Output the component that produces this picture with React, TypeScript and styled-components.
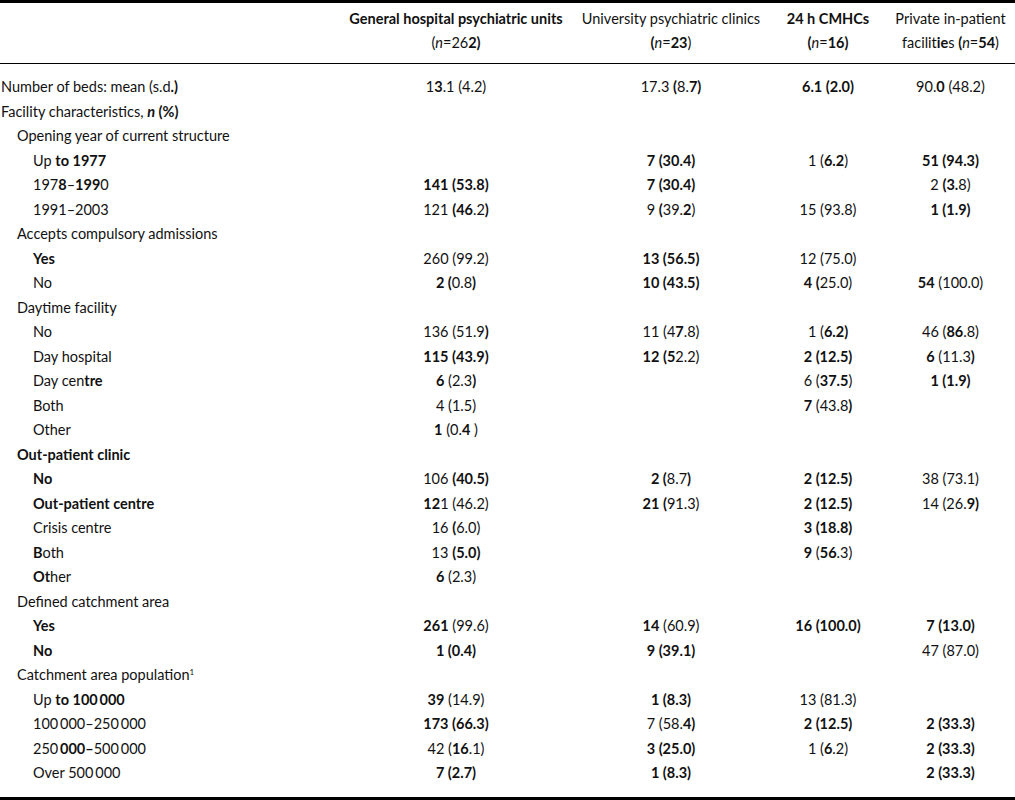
import React from "react";
import styled, { createGlobalStyle } from "styled-components";

const Global = createGlobalStyle`
  html, body { margin: 0; padding: 0; background: #fff; }
  body { font-family: Lato, "Open Sans", "Liberation Sans", sans-serif; color: #111; }
`;

const Table = styled.table`
  width: 1015px;
  border-collapse: collapse;
  table-layout: fixed;
  border-top: 3px solid #000;
  border-bottom: 3px solid #000;
  font-size: 14.5px;
`;

const HeadRow = styled.tr`
  border-bottom: 1px solid #000;
`;

const HeadCell = styled.th<{ $align?: string }>`
  font-weight: 400;
  text-align: ${(p) => p.$align || "center"};
  line-height: 24px;
  padding: 4px 0 8px;
  white-space: nowrap;
  vertical-align: top;
`;

const Body = styled.tbody`
  tr:first-child td { padding-top: 11px; }
  tr:last-child td { padding-bottom: 11px; }
`;

const Row = styled.tr``;

const LabelCell = styled.td<{ $level: number }>`
  padding: 0 0 0 ${(p) => 1 + p.$level * 16}px;
  line-height: 24.5px;
  white-space: nowrap;
`;

const ValueCell = styled.td`
  padding: 0;
  line-height: 24.5px;
  text-align: center;
  white-space: nowrap;
`;

const B = styled.b`
  font-weight: 700;
`;

const I = styled.i`
  font-style: italic;
`;

const Sup = styled.sup`
  font-size: 8px;
  line-height: 0;
  vertical-align: 5px;
`;

function rich(s: string, key = "r"): React.ReactNode[] {
  const parts = s.split(/(\*\*[^*]+\*\*|_[^_]+_|\^[^^]+\^)/);
  return parts
    .filter((p) => p !== "")
    .map((p, i) => {
      const k = `${key}-${i}`;
      if (p.startsWith("**") && p.endsWith("**"))
        return <B key={k}>{rich(p.slice(2, -2), k)}</B>;
      if (p.startsWith("_") && p.endsWith("_") && p.length > 1)
        return <I key={k}>{p.slice(1, -1)}</I>;
      if (p.startsWith("^") && p.endsWith("^") && p.length > 1)
        return <Sup key={k}>{p.slice(1, -1)}</Sup>;
      return <React.Fragment key={k}>{p}</React.Fragment>;
    });
}

type RowData = { label: string; level: number; v?: [string, string, string, string] };

const T = "\u2009";

const rows: RowData[] = [
  { label: "Number of beds: mean (s.d**.)**", level: 0, v: ["1**3**.1 (4.2)", "17.3 **(**8.**7)**", "**6.1 (2.0)**", "90.**0** (48.2)"] },
  { label: "Facility characteristics, **_n_ (%)**", level: 0 },
  { label: "Opening year of current structure", level: 1 },
  { label: "Up **to 1977**", level: 2, v: ["", "**7 (30.4)**", "1 (**6.2**)", "**51 (94.3)**"] },
  { label: "197**8**–**199**0", level: 2, v: ["**141 (53.8)**", "**7 (30.4)**", "", "2 **(3.**8)"] },
  { label: "1991–2003", level: 2, v: ["121 **(46**.2**)**", "9 **(**39.**2**)", "15 (93.8)", "**1 (1.9)**"] },
  { label: "Accepts compulsory admissions", level: 1 },
  { label: "**Yes**", level: 2, v: ["260 (99.2)", "**13 (56.5)**", "12 (75.0)", ""] },
  { label: "No", level: 2, v: ["**2 (**0.8**)**", "**10 (43.5)**", "**4 (**25.0)", "**54** (100.0)"] },
  { label: "Daytime facility", level: 1 },
  { label: "No", level: 2, v: ["136 (51.9**)**", "11 (4**7**.8)", "1 (**6.2)**", "46 (**86**.8)"] },
  { label: "Day hospital", level: 2, v: ["**115 (43.9)**", "**12 (5**2.2)", "**2 (12.5)**", "**6** (11.3**)**"] },
  { label: "Day cen**tre**", level: 2, v: ["**6** (2.3**)**", "", "6 (**37.5**)", "**1 (1.9)**"] },
  { label: "Both", level: 2, v: ["4 (1.5)", "", "**7** (43.8**)**", ""] },
  { label: "Other", level: 2, v: ["**1** (0.**4** )", "", "", ""] },
  { label: "**Out-patient clinic**", level: 1 },
  { label: "**No**", level: 2, v: ["106 **(40.5)**", "**2 (**8.7**)**", "**2 (12.5)**", "38 (73.1)"] },
  { label: "**Out-patient centre**", level: 2, v: ["**12**1 (46.2)", "**21 (**91.3)", "**2 (12.5)**", "14 (26.**9)**"] },
  { label: "Crisis centre", level: 2, v: ["16 **(**6.0)", "", "**3 (18.8)**", ""] },
  { label: "**B**oth", level: 2, v: ["13 **(5.0)**", "", "**9** (**56**.3)", ""] },
  { label: "**Ot**her", level: 2, v: ["**6** (2.3)", "", "", ""] },
  { label: "Defined catchment area", level: 1 },
  { label: "**Yes**", level: 2, v: ["**261** (99.6)", "**14** (60.9)", "**16 (100.0)**", "**7 (13.0)**"] },
  { label: "**No**", level: 2, v: ["**1 (0.4)**", "**9 (39.1)**", "", "47 (87.0)"] },
  { label: "Catchment area population^1^", level: 1 },
  { label: `Up **to 100${T}000**`, level: 2, v: ["**39** (14.9)", "**1 (8.3)**", "13 (81.3)", ""] },
  { label: `100${T}000–250${T}000`, level: 2, v: ["**173 (66.3)**", "7 (58.**4)**", "**2 (12.5)**", "**2 (33.3)**"] },
  { label: `250${T}**000–**500${T}000`, level: 2, v: ["42 (**16**.1)", "**3 (25.0)**", "1 (**6**.2)", "**2 (33.3)**"] },
  { label: `Over 500${T}000`, level: 2, v: ["**7 (2.7)**", "**1 (8.3)**", "", "**2 (33.3)**"] },
];

const headers: [string, string][] = [
  ["**General hospital psychiatric units**", "(_n_=26**2)**"],
  ["University psychiatric clinics", "**(**_n_=**23**)"],
  ["**24 h CMHCs**", "**(**_n_=**16)**"],
  ["Private in-patient", "facilit**ie**s **(**_n_=**54**)"],
];

const widths = [340, 232, 198, 116, 129];

export default function App() {
  return (
    <>
      <Global />
      <Table>
        <colgroup>
          {widths.map((w, i) => (
            <col key={i} style={{ width: w }} />
          ))}
        </colgroup>
        <thead>
          <HeadRow>
            <HeadCell $align="left" />
            {headers.map(([a, b], i) => (
              <HeadCell key={i}>
                {rich(a, `h${i}a`)}
                <br />
                {rich(b, `h${i}b`)}
              </HeadCell>
            ))}
          </HeadRow>
        </thead>
        <Body>
          {rows.map((r, i) => (
            <Row key={i}>
              <LabelCell $level={r.level}>{rich(r.label, `l${i}`)}</LabelCell>
              {(r.v || ["", "", "", ""]).map((v, j) => (
                <ValueCell key={j}>{rich(v, `v${i}-${j}`)}</ValueCell>
              ))}
            </Row>
          ))}
        </Body>
      </Table>
    </>
  );
}
